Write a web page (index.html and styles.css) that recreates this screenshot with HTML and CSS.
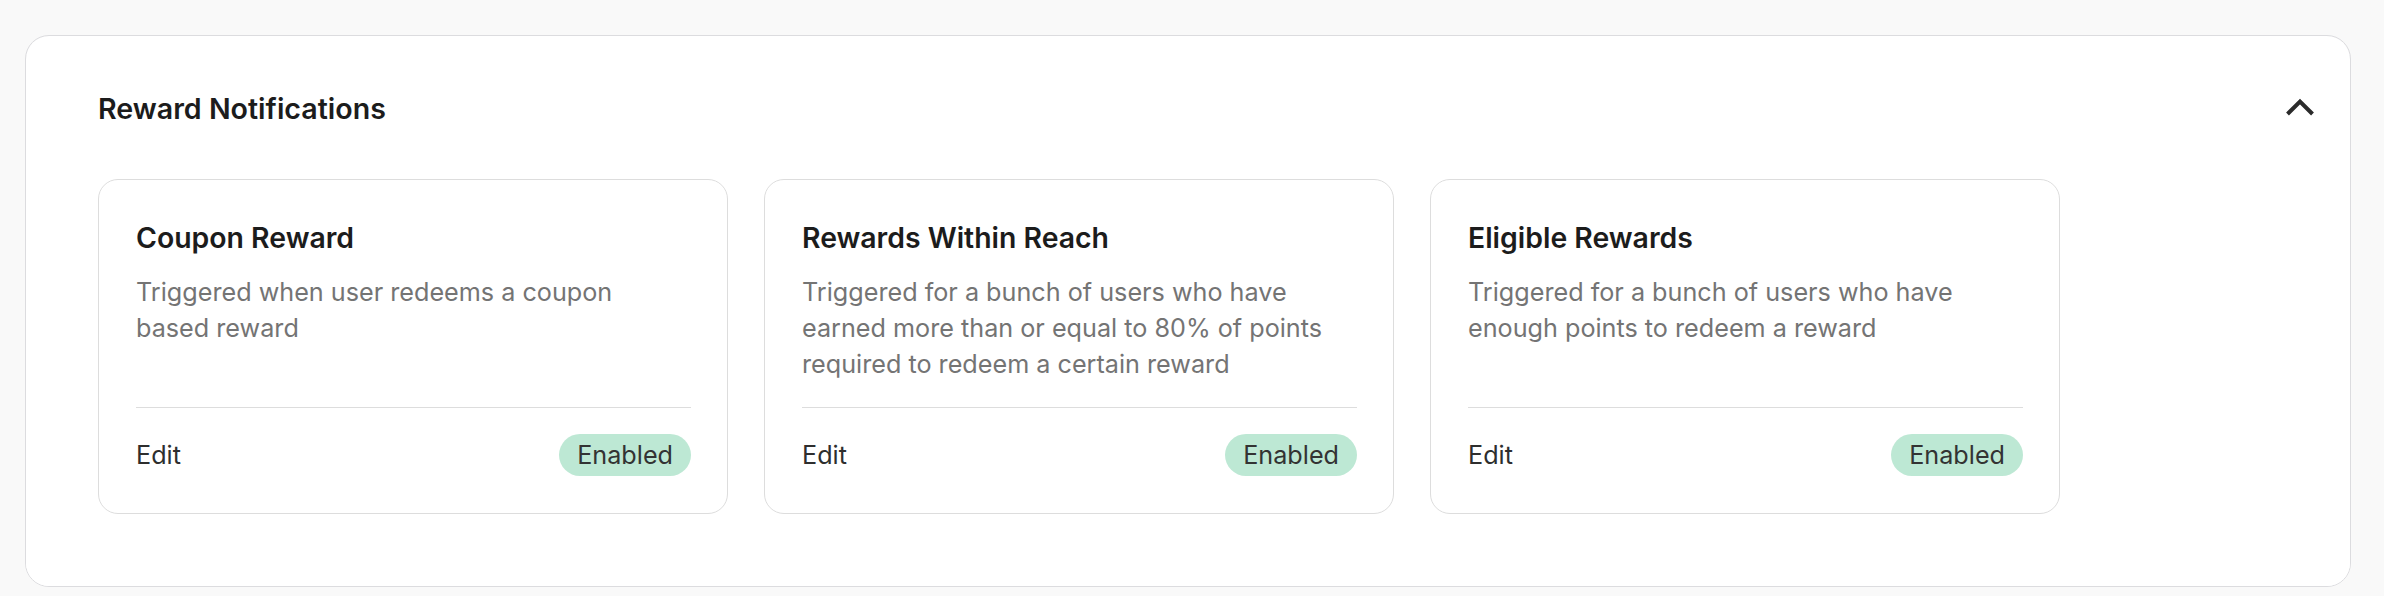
FILE: index.html
```html
<!DOCTYPE html>
<html lang="en">
<head>
<meta charset="utf-8">
<title>Reward Notifications</title>
<link rel="stylesheet" href="styles.css">
</head>
<body>
<main class="page">
  <section class="panel">
    <header class="panel-header">
      <h2 class="panel-title">Reward Notifications</h2>
      <button class="collapse-btn" aria-label="Collapse">
        <svg width="30" height="20" viewBox="0 0 30 20" aria-hidden="true">
          <path d="M2.5 17 L15 4.5 L27.5 17" fill="none" stroke="#2b2b2b" stroke-width="4" stroke-linecap="butt" stroke-linejoin="miter"/>
        </svg>
      </button>
    </header>
    <div class="panel-body">
      <div class="card-grid">
        <article class="card">
          <h3 class="card-title">Coupon Reward</h3>
          <p class="card-desc">Triggered when user redeems a coupon based reward</p>
          <div class="card-footer">
            <span class="card-edit">Edit</span>
            <span class="badge">Enabled</span>
          </div>
        </article>
        <article class="card">
          <h3 class="card-title">Rewards Within Reach</h3>
          <p class="card-desc">Triggered for a bunch of users who have earned more than or equal to 80% of points required to redeem a certain reward</p>
          <div class="card-footer">
            <span class="card-edit">Edit</span>
            <span class="badge">Enabled</span>
          </div>
        </article>
        <article class="card">
          <h3 class="card-title">Eligible Rewards</h3>
          <p class="card-desc">Triggered for a bunch of users who have enough points to redeem a reward</p>
          <div class="card-footer">
            <span class="card-edit">Edit</span>
            <span class="badge">Enabled</span>
          </div>
        </article>
      </div>
    </div>
  </section>
</main>
</body>
</html>
```
FILE: styles.css
```css
* { box-sizing: border-box; }

html, body {
  margin: 0;
  padding: 0;
  background: #f9f9f9;
  font-family: Inter, "Noto Sans", "Liberation Sans", sans-serif;
}

.page {
  padding: 35px 33px 10px 25px;
}

.panel {
  background: #ffffff;
  border: 1px solid #dcdcdf;
  border-radius: 24px;
  overflow: hidden;
}

.panel-header {
  display: flex;
  align-items: center;
  justify-content: space-between;
  height: 143px;
  padding: 2px 35px 0 72px;
  border-radius: 24px 24px 0 0;
  box-shadow: 0 0 14px rgba(0, 0, 0, 0.05);
}

.panel-title {
  margin: 0;
  font-size: 28.6px;
  line-height: 42px;
  font-weight: 600;
  color: #1c1c1c;
}

.collapse-btn {
  display: flex;
  align-items: center;
  justify-content: center;
  padding: 0;
  margin: 0;
  border: 0;
  background: none;
  width: 30px;
  height: 20px;
  margin-top: -3px;
}

.panel-body {
  position: relative;
  background: #ffffff;
  padding: 0 72px 72px 72px;
}

.card-grid {
  display: grid;
  grid-template-columns: repeat(3, 630px);
  gap: 36px;
}

.card {
  display: flex;
  flex-direction: column;
  border: 1px solid #dddddd;
  border-radius: 20px;
  padding: 37px 36px 37px 37px;
}

.card-title {
  margin: 0;
  font-size: 28.4px;
  line-height: 42px;
  font-weight: 600;
  color: #1c1c1c;
}

.card-desc {
  flex: 1;
  margin: 14.5px 0 0 0;
  font-size: 25.2px;
  line-height: 36px;
  color: #747474;
}

.card-footer {
  display: flex;
  align-items: center;
  justify-content: space-between;
  margin-top: 25px;
  padding-top: 26px;
  border-top: 1px solid #dddddd;
}

.card-edit {
  font-size: 25.2px;
  color: #2e2e2e;
}

.badge {
  display: inline-flex;
  align-items: center;
  height: 42px;
  padding: 0 18px;
  border-radius: 21px;
  background: #bde8d4;
  color: #333333;
  font-size: 25.2px;
}
```
